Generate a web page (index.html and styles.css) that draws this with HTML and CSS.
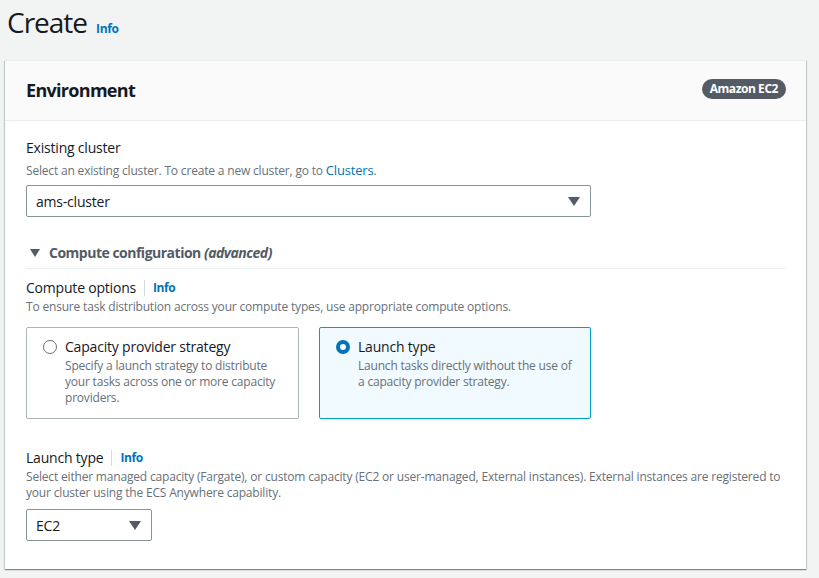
FILE: index.html
```html
<!DOCTYPE html>
<html lang="en">
<head>
<meta charset="utf-8">
<title>Create</title>
<link rel="stylesheet" href="styles.css">
</head>
<body>
<div class="page">
  <div class="page-header">
    <h1 class="title">Create</h1>
    <a class="info-link title-info" href="#">Info</a>
  </div>
  <div class="card">
    <div class="card-header">
      <h2 class="card-title">Environment</h2>
      <span class="badge">Amazon EC2</span>
    </div>
    <div class="card-body">
      <div class="field">
        <div class="label-row"><span class="label">Existing cluster</span></div>
        <div class="desc">Select an existing cluster. To create a new cluster, go to <a class="link" href="#">Clusters</a>.</div>
        <div class="select select-wide">
          <span>ams-cluster</span>
          <span class="caret"></span>
        </div>
      </div>

      <div class="expander">
        <span class="exp-caret"></span>
        <span class="exp-title">Compute configuration <i>(advanced)</i></span>
      </div>

      <div class="field field-compute">
        <div class="label-row"><span class="label">Compute options</span><span class="sep"></span><a class="info-link" href="#">Info</a></div>
        <div class="desc">To ensure task distribution across your compute types, use appropriate compute options.</div>
        <div class="tiles">
          <div class="tile">
            <span class="radio"></span>
            <div class="tile-text">
              <div class="tile-title">Capacity provider strategy</div>
              <div class="tile-desc">Specify a launch strategy to distribute your tasks across one or more capacity providers.</div>
            </div>
          </div>
          <div class="tile tile-selected">
            <span class="radio radio-on"></span>
            <div class="tile-text">
              <div class="tile-title">Launch type</div>
              <div class="tile-desc">Launch tasks directly without the use of a capacity provider strategy.</div>
            </div>
          </div>
        </div>
      </div>

      <div class="field field-launch">
        <div class="label-row"><span class="label">Launch type</span><span class="sep"></span><a class="info-link" href="#">Info</a></div>
        <div class="desc">Select either managed capacity (Fargate), or custom capacity (EC2 or user-managed, External instances). External instances are registered to your cluster using the ECS Anywhere capability.</div>
        <div class="select select-small">
          <span>EC2</span>
          <span class="caret"></span>
        </div>
      </div>
    </div>
  </div>
</div>
</body>
</html>
```

FILE: styles.css
```css
* { box-sizing: border-box; }
html, body { margin: 0; padding: 0; }
body {
  background: #f2f3f3;
  color: #16191f;
  font-family: "Open Sans", "Noto Sans", Arial, sans-serif;
  font-size: 14px;
  letter-spacing: -0.2px;
  width: 819px;
  height: 578px;
  overflow: hidden;
}
a { text-decoration: none; }
.page { padding: 0 13px 0 5px; }
.page-header {
  display: flex;
  align-items: baseline;
  gap: 9px;
  height: 60px;
  padding: 2px 0 0 2px;
}
.title {
  margin: 0;
  font-size: 28px;
  font-weight: 400;
  line-height: 40px;
  letter-spacing: -1px;
}
.info-link {
  color: #0073bb;
  font-size: 12px;
  font-weight: 700;
  letter-spacing: -0.4px;
}
.card {
  background: #fff;
  box-shadow: 0 1px 1px 0 rgba(0, 28, 36, 0.3), 1px 1px 1px 0 rgba(0, 28, 36, 0.15), -1px 1px 1px 0 rgba(0, 28, 36, 0.15);
  border-top: 1px solid #eaeded;
}
.card-header {
  display: flex;
  align-items: center;
  justify-content: space-between;
  height: 60px;
  padding: 0 20px 0 21px;
  background: #fafafa;
  border-bottom: 1px solid #eaeded;
}
.card-title {
  margin: -2px 0 0 0;
  font-size: 18px;
  font-weight: 700;
  line-height: 22px;
  letter-spacing: -0.7px;
}
.badge {
  background: #545b64;
  color: #fff;
  font-size: 12px;
  font-weight: 700;
  line-height: 20px;
  padding: 0 8px;
  border-radius: 10px;
  margin-top: -3px;
  letter-spacing: -0.45px;
}
.card-body { padding: 16px 20px 28px 21px; }
.label-row {
  display: flex;
  align-items: center;
  line-height: 22px;
}
.label { font-size: 14px; }
.sep {
  width: 1px;
  height: 16px;
  background: #d5dbdb;
  margin: 0 8px 0 8px;
}
.desc {
  font-size: 12px;
  line-height: 16px;
  color: #687078;
  margin-top: 3px;
  letter-spacing: -0.18px;
}
.link { color: #0073bb; font-size: 13px; }
.select {
  display: flex;
  align-items: center;
  justify-content: space-between;
  height: 32px;
  margin-top: 6px;
  padding: 0 10px 0 9px;
  border: 1px solid #879596;
  border-radius: 2px;
  font-size: 14px;
  background: #fff;
}
.select-wide { width: 565px; }
.select-small { width: 126px; margin-top: 8px; }
.caret {
  width: 0;
  height: 0;
  border-left: 6px solid transparent;
  border-right: 6px solid transparent;
  border-top: 9px solid #545b64;
}
.expander {
  display: flex;
  align-items: center;
  margin-top: 25px;
  padding: 0 0 4px 4px;
  line-height: 22px;
  border-bottom: 1px solid #eaeded;
  width: 759px;
}
.exp-caret {
  width: 0;
  height: 0;
  border-left: 5px solid transparent;
  border-right: 5px solid transparent;
  border-top: 8px solid #545b64;
  margin-right: 9px;
}
.exp-title {
  font-size: 14px;
  font-weight: 700;
  color: #545b64;
  letter-spacing: -0.5px;
}
.field-compute { margin-top: 8px; }
.field-compute .desc { margin-top: 0; }
.tiles {
  display: grid;
  grid-template-columns: 273px 272px;
  gap: 20px;
  margin-top: 12px;
}
.tile {
  display: flex;
  align-items: flex-start;
  gap: 8px;
  min-height: 92px;
  padding: 8px 14px 10px 16px;
  border: 1px solid #aab7b8;
  border-radius: 2px;
}
.tile-selected {
  border-color: #00a1c9;
  background: #f1faff;
}
.radio {
  flex: none;
  width: 14px;
  height: 14px;
  margin-top: 4px;
  border: 1px solid #687078;
  border-radius: 50%;
  background: #fff;
}
.radio-on {
  border: 4px solid #0073bb;
}
.tile-title { font-size: 14px; line-height: 22px; }
.tile-desc { font-size: 12px; line-height: 16px; color: #687078; letter-spacing: -0.2px; }
.field-launch { margin-top: 28px; }
.field-launch .desc { margin-top: 0; }
```
